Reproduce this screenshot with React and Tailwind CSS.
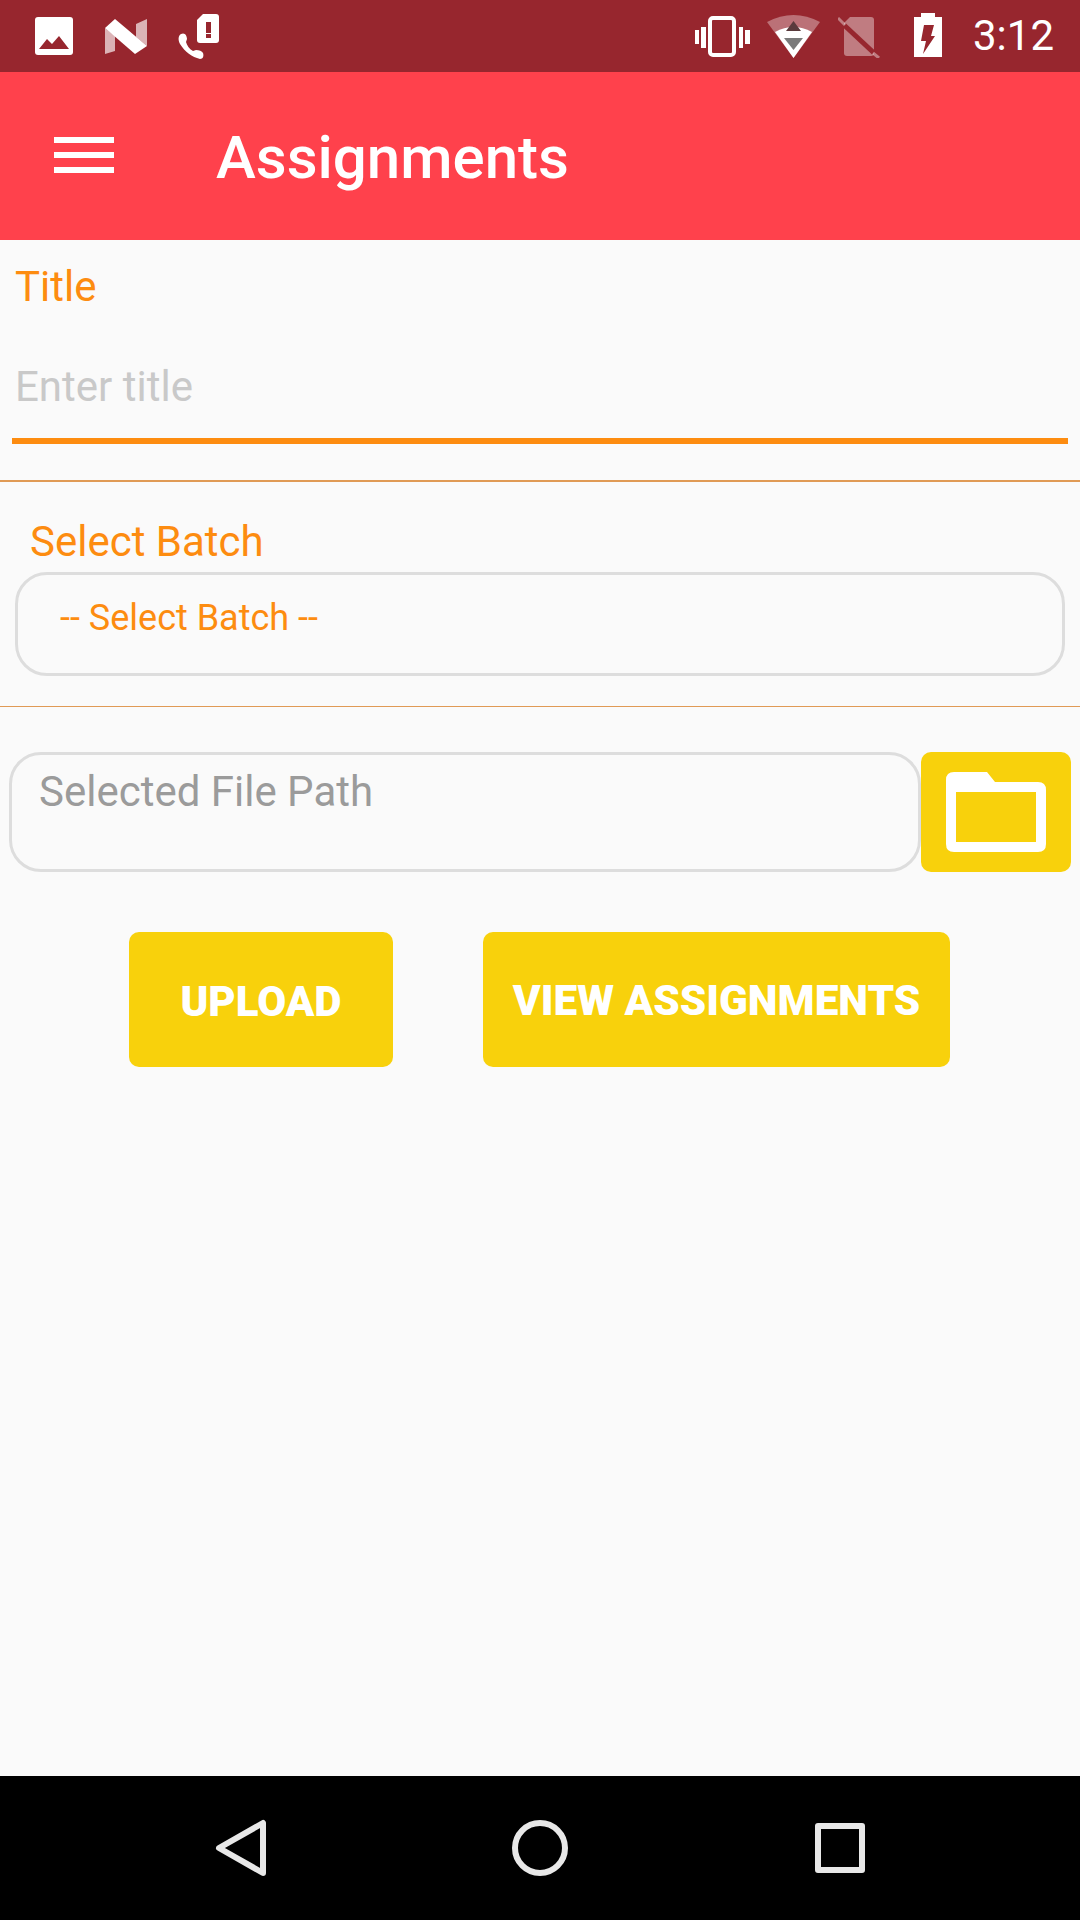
const roboto = { fontFamily: 'Roboto, sans-serif' };

const StatusBar = () => (
  <div className="flex h-[72px] items-center bg-[#97262e] pl-[35px] text-white">
    {/* picture */}
    <svg width="38" height="38" viewBox="0 0 38 38">
      <rect width="38" height="38" rx="3" fill="#fff" />
      <path d="M4 32 L12 22 L17 27 L24 19 L34 32 Z" fill="#97262e" />
    </svg>
    {/* android n */}
    <svg width="42" height="35" viewBox="0 0 42 35" className="ml-[32px]">
      <path d="M0 9 L10 17 V32 L0 35Z M31 5 L42 0 V27 L31 18Z" fill="#fff" fillOpacity="0.65" />
      <path d="M0 9 L10 0 L42 27 L30 35Z" fill="#fff" />
    </svg>
    {/* call alert */}
    <svg width="43" height="45" viewBox="0 0 43 45" className="ml-[30px]">
      <path d="M4 20 C1 22 1 26 3 30 C8 38 15 43 23 45 C26 45 27 42 26 39 C25 37 22 36 19 36 L16 37 C12 35 10 31 9 28 L10 25 C10 22 8 18 4 20Z" fill="#fff" />
      <path d="M26 0 H39 Q42 0 42 3 V26 Q42 29 39 29 H23 Q20 29 20 26 V6Z" fill="#fff" />
      <rect x="29" y="8" width="5" height="11" fill="#97262e" />
      <rect x="29" y="20" width="5" height="4" fill="#97262e" />
    </svg>
    {/* vibrate */}
    <svg width="55" height="41" viewBox="0 0 55 41" className="ml-[475px]">
      <rect x="15" y="2" width="24" height="37" rx="3" fill="none" stroke="#fff" strokeWidth="4" />
      <rect x="0" y="14" width="4" height="14" fill="#fff" />
      <rect x="6" y="11" width="5" height="21" fill="#fff" />
      <rect x="44" y="11" width="4" height="21" fill="#fff" />
      <rect x="50" y="14" width="5" height="14" fill="#fff" />
    </svg>
    {/* wifi */}
    <svg width="53" height="43" viewBox="0 0 53 43" className="ml-[17px]">
      <path d="M0 7 Q26.5 -7 53 7 L26.5 43Z" fill="#fff" fillOpacity="0.35" />
      <path d="M8 17 Q26.5 7 45 17 L26.5 43Z" fill="#fff" />
      <path d="M26.5 6 L34 16 H19Z" fill="#5a3a3c" />
      <path d="M17 23 H36 L26.5 35Z" fill="#7a7a7a" />
    </svg>
    {/* no sim */}
    <svg width="42" height="43" viewBox="0 0 42 43" className="ml-[18px]">
      <path d="M12 2 H33 Q36 2 36 5 V38 Q36 41 33 41 H9 Q6 41 6 38 V8Z" fill="#fff" fillOpacity="0.4" />
      <path d="M6 10 L36 38" stroke="#97262e" strokeWidth="5" />
      <path d="M0 3 L7 10 M35 38 L41 43" stroke="#fff" strokeOpacity="0.4" strokeWidth="3" />
    </svg>
    {/* battery charging */}
    <svg width="28" height="44" viewBox="0 0 28 44" className="ml-[34px] mb-[2px]">
      <path d="M7 0 H21 V4 H28 V44 H0 V4 H7Z" fill="#fff" />
      <path d="M10 12 H20 L17 23 H21 L9 41 L12 28 H7Z" fill="#97262e" />
    </svg>
    <span className="ml-[31px] text-[42px] leading-none" style={roboto}>3:12</span>
  </div>
);

const Toolbar = () => (
  <div className="flex h-[168px] items-center bg-[#ff414c] text-white">
    <div className="mb-[3px] ml-[54px] flex w-[60px] flex-col gap-[9px]">
      <div className="h-[6px] bg-white" />
      <div className="h-[6px] bg-white" />
      <div className="h-[6px] bg-white" />
    </div>
    <h1 className="ml-[102px] pt-[4px] text-[60px] font-medium leading-none" style={roboto}>Assignments</h1>
  </div>
);

const FolderIcon = () => (
  <svg width="100" height="80" viewBox="0 0 100 80">
    <path d="M8 0 H41 L49 10 H92 Q100 10 100 18 V72 Q100 80 92 80 H8 Q0 80 0 72 V8 Q0 0 8 0Z" fill="#fff" />
    <rect x="10" y="20" width="80" height="50" fill="#f8d10c" />
  </svg>
);

const NavBar = () => (
  <div className="flex h-[144px] items-center bg-black pl-[214px]">
    <svg width="52" height="58" viewBox="0 0 52 58">
      <path d="M49 4 V54 L5 29Z" fill="none" stroke="#e8e8e8" strokeWidth="6" strokeLinejoin="round" />
    </svg>
    <div className="ml-[246px] h-[56px] w-[56px] rounded-full border-[6px] border-[#e8e8e8]" />
    <div className="ml-[247px] h-[50px] w-[50px] rounded-[3px] border-[6px] border-[#e8e8e8]" />
  </div>
);

export default function App() {
  return (
    <div className="flex h-[1920px] w-[1080px] flex-col bg-[#fafafa]" style={roboto}>
      <StatusBar />
      <Toolbar />

      <div className="flex-1">
        <div className="pl-[15px] pt-[23px] text-[42px] leading-[47px] text-[#fd8c10]">Title</div>
        <div className="mx-[12px] mt-[27px] h-[107px] border-b-[6px] border-[#fd8c10] pl-[3px] pt-[26px] text-[42px] leading-[47px] text-[#c9c9c9]">
          Enter title
        </div>
        <div className="mt-[36px] h-[1.5px] bg-[#e09a55]" />

        <div className="px-[15px] pt-[36px]">
          <div className="pl-[15px] text-[42px] leading-[47px] text-[#fd8c10]">Select Batch</div>
          <div className="mt-[7px] h-[104px] rounded-[32px] border-[3px] border-[#dddddd] pl-[42px] pt-[22px] text-[36px] leading-[42px] text-[#fd8c10]">
            -- Select Batch --
          </div>
        </div>
        <div className="mt-[30px] h-[1.5px] bg-[#e09a55]" />

        <div className="mt-[45px] flex pl-[9px]">
          <div className="h-[120px] w-[912px] rounded-[32px] border-[3px] border-[#dddddd] pl-[27px] pt-[13px] text-[42px] leading-[47px] text-[#9b9b9b]">
            Selected File Path
          </div>
          <button className="flex h-[120px] w-[150px] items-center justify-center rounded-[10px] bg-[#f8d10c]">
            <FolderIcon />
          </button>
        </div>

        <div className="mt-[60px] flex gap-[90px] pl-[129px]">
          <button className="h-[135px] w-[264px] rounded-[10px] bg-[#f8d10c] pt-[3px] text-[42px] font-black text-white">UPLOAD</button>
          <button className="h-[135px] w-[467px] rounded-[10px] bg-[#f8d10c] pt-[3px] text-[42.3px] font-black text-white">VIEW ASSIGNMENTS</button>
        </div>
      </div>

      <NavBar />
    </div>
  );
}
